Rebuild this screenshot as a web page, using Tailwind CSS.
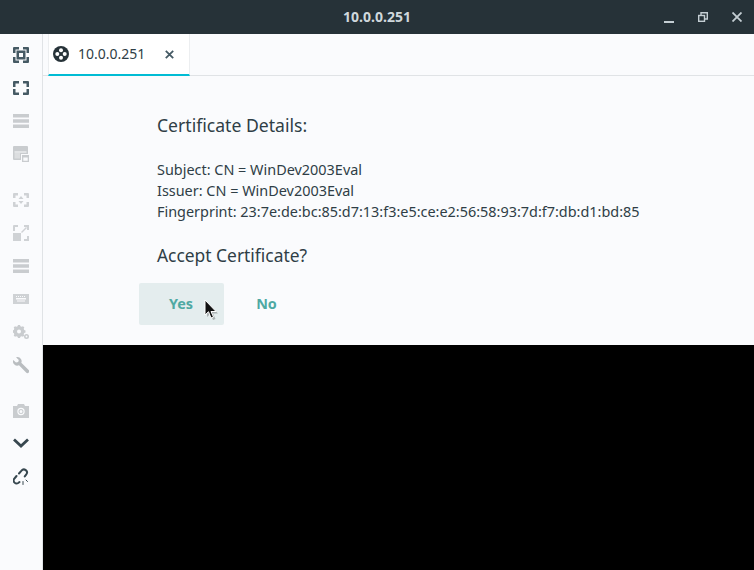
<!DOCTYPE html>
<html lang="en">
<head>
<meta charset="UTF-8">
<title>10.0.0.251</title>
<script src="https://cdn.jsdelivr.net/npm/@tailwindcss/browser@4"></script>
</head>
<body class="w-[754px] h-[570px] overflow-hidden flex flex-col bg-[#fafbfd] text-[#2f3e46] font-['Noto_Sans',sans-serif]">
  <!-- title bar -->
  <header class="h-[34px] shrink-0 bg-[#263238] flex items-center relative">
    <div class="flex-1 text-center text-[14px] font-bold text-[#cfd8dc] mb-[2px]">10.0.0.251</div>
    <div class="absolute right-0 top-0 h-[34px] flex items-center text-[#c4ced3]">
      <svg class="w-[10px] h-[10px] mr-[24px] mt-[1px]" viewBox="0 0 10 10" fill="currentColor"><rect y="8" width="10" height="2"/></svg>
      <svg class="w-[10px] h-[10px] mr-[24px]" viewBox="0 0 10 10" fill="none" stroke="currentColor" stroke-width="1.400"><path d="M3 3V.7h6.300V7H7"/><rect x=".7" y="3.500" width="5.800" height="5.800"/></svg>
      <svg class="w-[10px] h-[10px] mr-[12px]" viewBox="0 0 10 10" fill="none" stroke="currentColor" stroke-width="1.800"><path d="M.5.5l9 9M9.500.5l-9 9"/></svg>
    </div>
  </header>
  <div class="flex-1 flex min-h-0">
    <!-- sidebar -->
    <aside class="w-[43px] shrink-0 border-r border-[#e0e3e6] flex flex-col items-center pr-[1px] pt-[12px] gap-[15px]">
      <svg class="w-[16px] h-[18px] text-[#455a64]" viewBox="0 0 16 16" fill="currentColor"><path d="M0 6V1a1 1 0 0 1 1-1h5v2.500H2.500V6zM10 0h5a1 1 0 0 1 1 1v5h-2.500V2.500H10zM16 10v5a1 1 0 0 1-1 1h-5v-2.500h3.500V10zM6 16H1a1 1 0 0 1-1-1v-5h2.500v3.500H6z"/><path fill-rule="evenodd" d="M3.500 3.500h9v9h-9zM6 6v4h4V6z"/></svg>
      <svg class="w-[16px] h-[18px] text-[#455a64]" viewBox="0 0 16 14" fill="currentColor"><path d="M0 6V1a1 1 0 0 1 1-1h5v2.500H2.500V6zM10 0h5a1 1 0 0 1 1 1v5h-2.500V2.500H10zM16 8v5a1 1 0 0 1-1 1h-5v-2.500h3.500V8zM6 14H1a1 1 0 0 1-1-1V8h2.500v3.500H6z"/></svg>
      <svg class="w-[16px] h-[18px] text-[#c9cccf]" viewBox="0 0 16 14" fill="currentColor"><rect width="16" height="3.500"/><rect y="5.250" width="16" height="3.500"/><rect y="10.500" width="16" height="3.500"/></svg>
      <svg class="w-[16px] h-[18px] text-[#c9cccf]" viewBox="0 0 16 16" fill="currentColor"><path d="M1 0h13a1 1 0 0 1 1 1v7H8v6H1a1 1 0 0 1-1-1V1a1 1 0 0 1 1-1z"/><rect x="1.500" y="5" width="12" height="2" fill="#e2e4e6"/><rect x="1.500" y="7" width="5.500" height="5.500" fill="#dcdee0"/><path fill-rule="evenodd" d="M9 9h7v7H9zM10.300 11.500v3.200h4.400v-3.200z"/></svg>
      <svg class="w-[16px] h-[18px] mt-[13px] text-[#cfd2d5]" viewBox="0 0 16 14" fill="currentColor"><path d="M0 5V1a1 1 0 0 1 1-1h4v2.500H2.500V5zM11 0h4a1 1 0 0 1 1 1v4h-2.500V2.500H11zM16 9v4a1 1 0 0 1-1 1h-4v-2.500h2.500V9zM5 14H1a1 1 0 0 1-1-1V9h2.500v2.500H5z"/><path d="M8 3l2.500 3h-5zM8 11L5.500 8h5z"/></svg>
      <svg class="w-[16px] h-[18px] text-[#cfd2d5]" viewBox="0 0 16 16" fill="currentColor"><rect y="8" width="8" height="8"/><path d="M0 6V1a1 1 0 0 1 1-1h4v2H2v4zM11 0h5v5h-2V2h-3zM16 11v5h-5v-2h3v-3z"/><path d="M8.500 7.500l5-5" stroke="currentColor" stroke-width="1.500"/></svg>
      <svg class="w-[16px] h-[18px] text-[#c9cccf]" viewBox="0 0 16 14" fill="currentColor"><rect width="16" height="3.500"/><rect y="5.250" width="16" height="3.500"/><rect y="10.500" width="16" height="3.500"/></svg>
      <svg class="w-[16px] h-[18px] text-[#cfd2d5]" viewBox="0 0 16 18" fill="currentColor"><path fill-rule="evenodd" d="M0 4h16v10H0zM3 6v1h1V6zm2 0v1h1V6zm2 0v1h1V6zm2 0v1h1V6zm2 0v1h1V6zM3 8v1.500h10V8zM4 10.500v1h8v-1z"/></svg>
      <svg class="w-[16px] h-[18px] text-[#c9cccf]" viewBox="0 0 16 16" fill="currentColor"><path fill-rule="evenodd" d="M5 1h2l.4 1.300 1.300.5L10 2.200l1.300 1.300-.6 1.300.5 1.300 1.300.4v2l-1.300.4-.5 1.300.6 1.300L10 12.800l-1.300-.6-1.300.5L7 14H5l-.4-1.300-1.300-.5-1.300.6L.7 11.500l.6-1.300-.5-1.300L-.500 8.500v-2L.8 6l.5-1.300-.6-1.300L2 2.200l1.300.6 1.300-.5zM6 5.500a2 2 0 1 0 0 4 2 2 0 0 0 0-4z"/><path fill-rule="evenodd" d="M13.500 10a2.500 2.500 0 1 1 0 5 2.500 2.500 0 0 1 0-5zm0 1.600a.9.900 0 1 0 0 1.800.9.900 0 0 0 0-1.800z"/></svg>
      <svg class="w-[16px] h-[18px] text-[#b9bdc0]" viewBox="0 0 16 16" fill="currentColor"><path d="M4.500 0a4.200 4.200 0 0 1 3.800 5.800l7.400 7.200a1.800 1.800 0 0 1-2.600 2.600L6 8.300A4.300 4.300 0 0 1 .2 3L3 5.600 5.200 5 5.800 3 3 .3A4.500 4.500 0 0 1 4.500 0z"/></svg>
      <svg class="w-[16px] h-[18px] mt-[13px] text-[#c9cccf]" viewBox="0 0 16 16" fill="currentColor"><path fill-rule="evenodd" d="M5 1h6l1 2h4v12H0V3h4zM8 4.800a3.700 3.700 0 1 0 0 7.400 3.700 3.700 0 0 0 0-7.400zm0 1.200a2.500 2.500 0 1 1 0 5 2.500 2.500 0 0 1 0-5zm0 1a1.500 1.500 0 1 0 0 3 1.500 1.500 0 0 0 0-3z"/></svg>
      <svg class="w-[16px] h-[18px] -mt-[1px] text-[#37474f]" viewBox="0 0 16 16" fill="none" stroke="currentColor" stroke-width="2.800"><path d="M1 4.500L8 11l7-6.500"/></svg>
      <svg class="w-[16px] h-[18px] mt-[1px] text-[#37474f]" viewBox="0 0 16 16" fill="none" stroke="currentColor" stroke-width="2" stroke-linecap="round"><path d="M6 4.500l2.500-2.800a3 3 0 0 1 4.800 3.700l-1.500 2"/><path d="M6.500 13l-1.300 1a3 3 0 0 1-4.200-4L3.500 7"/><path d="M10 12.500v3M13 11l1.500 1.500" stroke-width="1"/></svg>
    </aside>
    <div class="flex-1 flex flex-col min-w-0">
      <!-- tabs -->
      <div class="h-[42px] shrink-0 flex border-b border-[#e0e3e6]">
        <div class="ml-[5px] w-[142px] h-[42px] bg-white border-b-2 border-b-[#00bcd4] border-x border-x-[#eceef0] flex items-center pl-[4px] text-[14px] text-[#2f3e46]">
          <svg class="w-[16px] h-[16px] text-[#263238]" viewBox="0 0 16 16"><circle cx="8" cy="8" r="8" fill="currentColor"/><g fill="#fff"><circle cx="8" cy="4.300" r="2"/><circle cx="8" cy="11.700" r="2"/><circle cx="4.300" cy="8" r="2"/><circle cx="11.700" cy="8" r="2"/></g></svg>
          <span class="ml-[9px] mb-[2px]">10.0.0.251</span>
          <svg class="w-[9px] h-[9px] ml-[20px] text-[#455a64]" viewBox="0 0 9 9" fill="none" stroke="currentColor" stroke-width="1.800"><path d="M.8.8l7.400 7.400M8.200.8L.8 8.200"/></svg>
        </div>
      </div>
      <!-- certificate prompt -->
      <main class="h-[269px] shrink-0 pl-[114px] pt-[37px] flex flex-col items-start">
        <h2 class="text-[17.600px] leading-[24px]">Certificate Details:</h2>
        <div class="mt-[22px] text-[14.430px] leading-[21px]">
          <p>Subject: CN = WinDev2003Eval</p>
          <p>Issuer: CN = WinDev2003Eval</p>
          <p>Fingerprint: 23:7e:de:bc:85:d7:13:f3:e5:ce:e2:56:58:93:7d:f7:db:d1:bd:85</p>
        </div>
        <h2 class="mt-[21px] text-[17.400px] leading-[24px]">Accept Certificate?</h2>
        <div class="mt-[16px] -ml-[18px] flex text-[14.400px] font-bold text-[#4fa9a3]">
          <button class="w-[85px] h-[42px] pb-[1px] pr-[1px] rounded-[2px] bg-[#e4edee]">Yes</button>
          <button class="w-[85px] h-[42px] pb-[1px]">No</button>
        </div>
      </main>
      <div class="flex-1 bg-black"></div>
    </div>
  </div>
  <!-- mouse pointer -->
  <svg class="absolute left-[204px] top-[299px] w-[16px] h-[22px]" viewBox="0 0 16 22"><path d="M3 3v15l3.500-3.300L9 21l2.500-1-2.500-5.500h5z" fill="#000" fill-opacity=".25"/><path d="M1 1v15l3.500-3.300L7 19l2.500-1-2.500-5.500h5z" fill="#111" stroke="#fff" stroke-width="1"/></svg>
</body>
</html>
